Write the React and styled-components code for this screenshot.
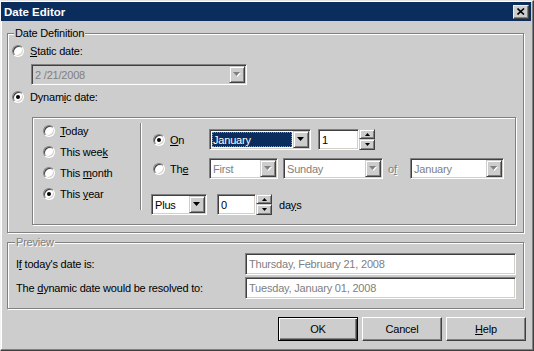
import React from "react";
import styled, { createGlobalStyle, css } from "styled-components";

const BG = "#cdcdcd";
const NAVY = "#0b2d5e";

const Global = createGlobalStyle`
  html, body { margin: 0; padding: 0; background: ${BG}; }
  body { font-family: "Liberation Sans", Arial, sans-serif; font-size: 11px; letter-spacing: -0.2px; color: #000; }
`;

const Window = styled.div`
  width: 534px;
  height: 351px;
  box-sizing: border-box;
  background: ${BG};
  border-top: 1px solid #e4e4e4;
  border-left: 1px solid #f4f4f4;
  border-right: 1px solid #404040;
  border-bottom: 1px solid #404040;
  box-shadow: inset -1px -1px 0 #808080, inset 1px 1px 0 #fff;
  padding: 1px 2px 2px 0;
  display: flex;
  flex-direction: column;
`;

const TitleBar = styled.div`
  height: 19px;
  background: ${NAVY};
  display: flex;
  align-items: center;
  justify-content: space-between;
  padding: 0 2px 0 3px;
`;

const TitleText = styled.span`
  color: #fff;
  font-weight: bold;
  font-size: 11.5px;
  letter-spacing: 0;
`;

const CloseBtn = styled.div`
  width: 16px;
  height: 14px;
  box-sizing: border-box;
  background: ${BG};
  border: 1px solid;
  border-color: #f0f0f0 #404040 #404040 #f0f0f0;
  box-shadow: inset -1px -1px 0 #808080;
  display: flex;
  align-items: center;
  justify-content: center;
`;

const Body = styled.div`
  display: flex;
  flex-direction: column;
  padding: 0 7px 0 6px;
`;

const Group = styled.div`
  position: relative;
  box-sizing: border-box;
  margin-top: ${(p) => p.$mt}px;
  height: ${(p) => p.$h}px;
  border: 1px solid #808080;
  box-shadow: inset 1px 1px 0 #fff, 1px 1px 0 #fff;
  padding: ${(p) => p.$pad};
  display: flex;
  flex-direction: column;
`;

const Legend = styled.span`
  position: absolute;
  top: -8px;
  left: ${(p) => p.$left}px;
  padding: 0 1px;
  line-height: 14px;
  background: ${BG};
  ${(p) =>
    p.$disabled &&
    css`
      color: #808080;
      text-shadow: 1px 1px 0 #fff;
    `}
`;

const Mn = styled.span`
  text-decoration: underline;
  text-underline-offset: 1px;
`;

const RadioRow = styled.div`
  display: flex;
  align-items: center;
  gap: ${(p) => p.$gap ?? 6}px;
  height: ${(p) => p.$h ?? 13}px;
  margin-top: ${(p) => p.$mt ?? 0}px;
  padding-left: ${(p) => p.$pl ?? 0}px;
  width: ${(p) => (p.$w ? `${p.$w}px` : "auto")};
  box-sizing: border-box;
  flex-shrink: 0;
  white-space: nowrap;
`;

const RadioDot = styled.span`
  position: relative;
  width: 12px;
  height: 12px;
  box-sizing: border-box;
  border-radius: 50%;
  background: #fff;
  border: 1px solid;
  border-color: #808080 #fff #fff #808080;
  box-shadow: inset 1px 1px 0 #404040, inset -1px -1px 0 #d4d0c8;
  flex-shrink: 0;
  &::after {
    content: "";
    display: ${(p) => (p.$checked ? "block" : "none")};
    position: absolute;
    left: 3px;
    top: 3px;
    width: 4px;
    height: 4px;
    border-radius: 50%;
    background: #000;
  }
`;

const Sunken = styled.div`
  display: flex;
  box-sizing: border-box;
  width: ${(p) => p.$w}px;
  height: ${(p) => p.$h ?? 21}px;
  margin: ${(p) => p.$m ?? 0};
  background: ${(p) => p.$bg ?? "#fff"};
  border: 1px solid;
  border-color: #808080 #fff #fff #808080;
  box-shadow: inset 1px 1px 0 #404040, inset -1px -1px 0 #d4d0c8;
  padding: 1px;
  flex-shrink: 0;
`;

const FieldText = styled.div`
  flex: 1;
  display: flex;
  align-items: center;
  padding-left: 2px;
  color: ${(p) => (p.$disabled ? "#808080" : "#000")};
  white-space: nowrap;
  overflow: hidden;
`;

const Selected = styled.div`
  flex: 1;
  display: flex;
  align-items: center;
  margin: 1px;
  padding-left: 1px;
  background: ${NAVY};
  color: #fff;
  outline: 1px dotted #7f8fb0;
  outline-offset: -1px;
  white-space: nowrap;
`;

const RaisedBtn = styled.div`
  width: ${(p) => p.$w ?? 16}px;
  height: ${(p) => (p.$h ? `${p.$h}px` : "100%")};
  box-sizing: border-box;
  background: ${BG};
  border: 1px solid;
  border-color: ${BG} #404040 #404040 ${BG};
  box-shadow: inset 1px 1px 0 #fff, inset -1px -1px 0 #808080;
  display: flex;
  align-items: center;
  justify-content: center;
  flex-shrink: 0;
`;

const SpinWrap = styled.div`
  display: flex;
  height: 21px;
  margin: ${(p) => p.$m ?? 0};
  flex-shrink: 0;
`;

const SpinCol = styled.div`
  display: flex;
  flex-direction: column;
  width: 16px;
`;

const Inner = styled.div`
  box-sizing: border-box;
  margin: 14px 0 0 20px;
  width: 484px;
  height: 108px;
  border: 1px solid #808080;
  box-shadow: inset 1px 1px 0 #fff, 1px 1px 0 #fff;
  display: flex;
  align-items: flex-start;
`;

const LeftCol = styled.div`
  box-sizing: border-box;
  width: 107px;
  padding: 7px 0 0 10px;
  display: flex;
  flex-direction: column;
  gap: 9px;
`;

const VSep = styled.div`
  width: 0;
  height: 87px;
  margin-top: 5px;
  border-left: 1px solid #808080;
  border-right: 1px solid #fff;
`;

const RightCol = styled.div`
  padding: 11px 0 0 9px;
  display: flex;
  flex-direction: column;
`;

const Line = styled.div`
  display: flex;
  align-items: center;
  height: 21px;
  margin-top: ${(p) => p.$mt ?? 0}px;
  gap: ${(p) => p.$gap ?? 0}px;
`;

const Label = styled.span`
  box-sizing: border-box;
  width: ${(p) => (p.$w ? `${p.$w}px` : "auto")};
  padding-left: ${(p) => p.$pl ?? 0}px;
  margin-left: ${(p) => p.$ml ?? 0}px;
  white-space: nowrap;
  flex-shrink: 0;
  ${(p) =>
    p.$disabled &&
    css`
      color: #808080;
      text-shadow: 1px 1px 0 #fff;
    `}
`;

const PreviewRow = styled.div`
  display: flex;
  align-items: center;
  height: 22px;
  margin-top: ${(p) => p.$mt ?? 0}px;
`;

const Footer = styled.div`
  display: flex;
  justify-content: flex-end;
  gap: 4px;
  margin: 8px -2px 0 0;
`;

const Button = styled.div`
  width: 80px;
  height: 24px;
  box-sizing: border-box;
  background: ${BG};
  display: flex;
  align-items: center;
  justify-content: center;
  ${(p) =>
    p.$default
      ? css`
          border: 1px solid #000;
          box-shadow: inset 1px 1px 0 #fff, inset -1px -1px 0 #404040,
            inset -2px -2px 0 #808080;
        `
      : css`
          border: 1px solid;
          border-color: #fff #404040 #404040 #fff;
          box-shadow: inset -1px -1px 0 #808080;
        `}
`;

const Arrow = ({ disabled }) => (
  <svg width="8" height="5" viewBox="0 0 8 5">
    {disabled && <polygon points="1,1 8,1 4.5,5" fill="#fff" />}
    <polygon points="0,0 7,0 3.5,4" fill={disabled ? "#808080" : "#000"} />
  </svg>
);

const SmallArrow = ({ up }) => (
  <svg width="5" height="3" viewBox="0 0 5 3">
    <polygon points={up ? "2.5,0 5,3 0,3" : "0,0 5,0 2.5,3"} fill="#000" />
  </svg>
);

const Combo = ({ w, text, disabled, bg, selected, m }) => (
  <Sunken $w={w} $bg={bg} $m={m}>
    {selected ? <Selected>{text}</Selected> : <FieldText $disabled={disabled}>{text}</FieldText>}
    <RaisedBtn>
      <Arrow disabled={disabled} />
    </RaisedBtn>
  </Sunken>
);

const Spin = ({ w, value, m }) => (
  <SpinWrap $m={m}>
    <Sunken $w={w}>
      <FieldText>{value}</FieldText>
    </Sunken>
    <SpinCol>
      <RaisedBtn $h={10}>
        <SmallArrow up />
      </RaisedBtn>
      <RaisedBtn $h={11}>
        <SmallArrow />
      </RaisedBtn>
    </SpinCol>
  </SpinWrap>
);

const Radio = ({ checked, children, ...rest }) => (
  <RadioRow {...rest}>
    <RadioDot $checked={checked} />
    <span>{children}</span>
  </RadioRow>
);

export default function App() {
  return (
    <>
      <Global />
      <Window>
        <TitleBar>
          <TitleText>Date Editor</TitleText>
          <CloseBtn>
            <svg width="8" height="7" viewBox="0 0 8 7">
              <path d="M0.5 0.5 L7 6.5 M7 0.5 L0.5 6.5" stroke="#000" strokeWidth="1.6" />
            </svg>
          </CloseBtn>
        </TitleBar>
        <Body>
          <Group $mt={12} $h={200} $pad="10px 0 0 4px">
            <Legend $left={6}>Date Definition</Legend>
            <Radio>
              <Mn>S</Mn>tatic date:
            </Radio>
            <Combo w={216} text="2 /21/2008" disabled bg={BG} m="7px 0 0 19px" />
            <Radio checked $mt={5}>
              Dynam<Mn>i</Mn>c date:
            </Radio>
            <Inner>
              <LeftCol>
                <Radio $h={12} $gap={5}>
                  <Mn>T</Mn>oday
                </Radio>
                <Radio $h={12} $gap={5}>
                  This wee<Mn>k</Mn>
                </Radio>
                <Radio $h={12} $gap={5}>
                  This <Mn>m</Mn>onth
                </Radio>
                <Radio $h={12} $gap={5} checked>
                  This <Mn>y</Mn>ear
                </Radio>
              </LeftCol>
              <VSep />
              <RightCol>
                <Line>
                  <Radio checked $h={21} $w={58} $pl={2} $gap={5}>
                    <Mn>O</Mn>n
                  </Radio>
                  <Combo w={102} text="January" selected />
                  <Spin w={41} value="1" m="0 0 0 7px" />
                </Line>
                <Line $mt={8}>
                  <Radio $h={21} $w={58} $pl={2} $gap={5}>
                    Th<Mn>e</Mn>
                  </Radio>
                  <Combo w={69} text="First" disabled />
                  <Combo w={100} text="Sunday" disabled m="0 0 0 5px" />
                  <Label $w={27} $pl={5} $disabled>
                    o<Mn>f</Mn>
                  </Label>
                  <Combo w={94} text="January" disabled />
                </Line>
                <Line $mt={15}>
                  <Combo w={56} text="Plus" />
                  <Spin w={39} value="0" m="0 0 0 10px" />
                  <Label $ml={7}>
                    da<Mn>y</Mn>s
                  </Label>
                </Line>
              </RightCol>
            </Inner>
          </Group>
          <Group $mt={9} $h={67} $pad="10px 0 0 8px">
            <Legend $left={7} $disabled>
              Preview
            </Legend>
            <PreviewRow>
              <Label $w={229}>
                I<Mn>f</Mn> today's date is:
              </Label>
              <Sunken $w={271} $h={22}>
                <FieldText $disabled>Thursday, February 21, 2008</FieldText>
              </Sunken>
            </PreviewRow>
            <PreviewRow $mt={2}>
              <Label $w={229}>
                The <Mn>d</Mn>ynamic date would be resolved to:
              </Label>
              <Sunken $w={271} $h={22}>
                <FieldText $disabled>Tuesday, January 01, 2008</FieldText>
              </Sunken>
            </PreviewRow>
          </Group>
          <Footer>
            <Button $default>OK</Button>
            <Button>Cancel</Button>
            <Button>
              <span>
                <Mn>H</Mn>elp
              </span>
            </Button>
          </Footer>
        </Body>
      </Window>
    </>
  );
}
